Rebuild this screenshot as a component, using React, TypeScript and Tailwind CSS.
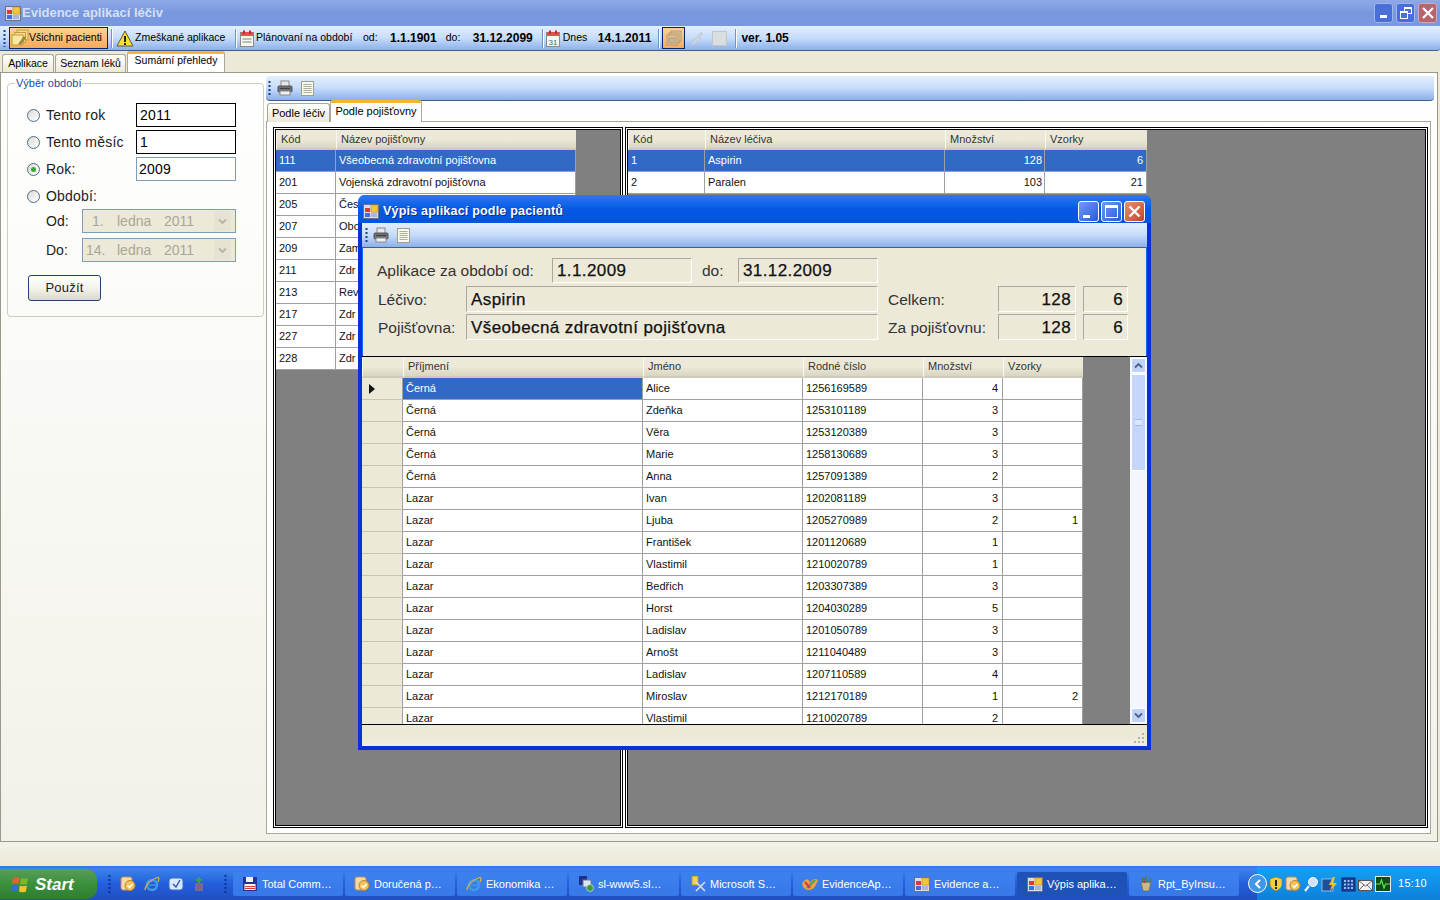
import React from "react";

const AppIcon = () => (
  <svg width="16" height="16" viewBox="0 0 16 16" className="shrink-0">
    <rect x="0.5" y="1.5" width="15" height="14" fill="#d9dce8" stroke="#6a6f8a" />
    <rect x="2" y="5" width="5" height="4" fill="#e23a2a" />
    <rect x="8" y="2" width="7" height="7" fill="#f6c63a" stroke="#b98a1a" strokeWidth="0.6" />
    <rect x="2" y="10" width="5" height="4" fill="#3f6fd8" />
    <rect x="8" y="10" width="6" height="4" fill="#a8b6d8" />
  </svg>
);

const Grip = ({ h = 16, color = "#1f3f86" }: { h?: number; color?: string }) => (
  <svg width="3" height={h} viewBox={`0 0 3 ${h}`} className="shrink-0">
    {[1, 5, 9, 13, 17, 21].filter((y) => y < h).map((y) => (
      <rect key={y} x="0.5" y={y} width="2" height="2" fill={color} />
    ))}
  </svg>
);

const Sep = () => <div className="w-px h-[19px] bg-[#6f93c9] border-r border-white box-content shrink-0" />;

const FolderIcon = () => (
  <svg width="18" height="18" viewBox="0 0 18 18" className="shrink-0">
    <rect x="6" y="1" width="11" height="10" fill="#f4d98a" stroke="#c79a3e" />
    <rect x="3.5" y="3.5" width="11" height="10" fill="#f7dd92" stroke="#c79a3e" />
    <rect x="1" y="6" width="11" height="10" fill="#fbe7a6" stroke="#c79a3e" />
    <path d="M7 15l6-8 2 2-5 7z" fill="#9a8a3a" />
  </svg>
);

const WarnIcon = () => (
  <svg width="18" height="17" viewBox="0 0 18 17" className="shrink-0">
    <path d="M9 1L17 16H1z" fill="#f8dc3a" stroke="#5a5a30" />
    <rect x="8" y="6" width="2" height="6" fill="#222" />
    <rect x="8" y="13" width="2" height="2" fill="#222" />
  </svg>
);

const CalIcon = ({ day }: { day?: string }) => (
  <svg width="14" height="17" viewBox="0 0 14 17" className="shrink-0">
    <rect x="0.5" y="2.5" width="13" height="14" fill="#f6f6f0" stroke="#8a8a8a" />
    <rect x="1" y="2" width="12" height="4" fill="#e25050" />
    <rect x="3" y="0.5" width="2" height="3.5" fill="#c02a2a" />
    <rect x="9" y="0.5" width="2" height="3.5" fill="#c02a2a" />
    {day ? (
      <text x="7" y="14.5" fontSize="8" textAnchor="middle" fill="#2f7a68" fontFamily="Liberation Sans">{day}</text>
    ) : (
      <g fill="#b9c0b0">
        <rect x="2.5" y="8" width="9" height="2" />
        <rect x="2.5" y="11" width="9" height="2" />
      </g>
    )}
  </svg>
);

const WindowsStack = () => (
  <svg width="16" height="16" viewBox="0 0 16 16">
    <rect x="5" y="1" width="10" height="10" fill="#f0c890" stroke="#b09a7a" />
    <rect x="3" y="3" width="10" height="10" fill="#eac48e" stroke="#b09a7a" />
    <rect x="1" y="5" width="10" height="10" fill="#e4c296" stroke="#b09a7a" />
    <rect x="3" y="8" width="6" height="5" fill="#cdb594" stroke="#b09a7a" />
  </svg>
);

const PrinterIcon = () => (
  <svg width="16" height="16" viewBox="0 0 16 16" className="shrink-0">
    <rect x="4" y="1" width="8" height="6" fill="#e8e8e8" stroke="#8a8a8a" />
    <rect x="1" y="6" width="14" height="6" rx="1" fill="#6d6f74" stroke="#55575c" />
    <rect x="3" y="11" width="10" height="4" fill="#f0f0f0" stroke="#8a8a8a" />
    <rect x="3" y="8" width="10" height="1" fill="#3f4145" />
  </svg>
);

const NoteIcon = () => (
  <svg width="13" height="15" viewBox="0 0 13 15" className="shrink-0">
    <rect x="0.5" y="0.5" width="12" height="14" fill="#f8f8ee" stroke="#9aa08a" />
    <g fill="#a9b298">
      <rect x="2.5" y="3" width="8" height="1" />
      <rect x="2.5" y="5" width="8" height="1" />
      <rect x="2.5" y="7" width="8" height="1" />
      <rect x="2.5" y="9" width="8" height="1" />
      <rect x="2.5" y="11" width="8" height="1" />
    </g>
  </svg>
);

const Radio = ({ on }: { on?: boolean }) => (
  <div className="w-[13px] h-[13px] rounded-full border border-[#4f6d8c] bg-gradient-to-br from-[#dcdcd4] to-white flex items-center justify-center shrink-0">
    {on && <div className="w-[5px] h-[5px] rounded-full bg-[#3aa83a]" />}
  </div>
);

const Chevron = ({ up, color = "#4d6185" }: { up?: boolean; color?: string }) => (
  <svg width="9" height="7" viewBox="0 0 9 7">
    <path d={up ? "M1 5.5L4.5 2 8 5.5" : "M1 1.5L4.5 5 8 1.5"} fill="none" stroke={color} strokeWidth="1.8" />
  </svg>
);

const Combo = ({ d, m, y, pl }: { d: string; m: string; y: string; pl: string }) => (
  <div className="w-[154px] h-[24px] border border-[#7f9db9] bg-[#ece9d8] flex items-center text-[14px] text-[#a8a699] shrink-0">
    <span className={pl + " w-[34px]"}>{d}</span>
    <span className="w-[47px]">{m}</span>
    <span className="w-[50px]">{y}</span>
    <div className="w-[17px] h-[20px] bg-[#e6e3d2] flex items-center justify-center">
      <Chevron color="#b5b3a6" />
    </div>
  </div>
);

const rowLeftA = [
  ["111", "Všeobecná zdravotní pojišťovna"],
  ["201", "Vojenská zdravotní pojišťovna"],
  ["205", "Čes"],
  ["207", "Obo"],
  ["209", "Zam"],
  ["211", "Zdr"],
  ["213", "Rev"],
  ["217", "Zdr"],
  ["227", "Zdr"],
  ["228", "Zdr"],
];

const rowsB = [
  ["1", "Aspirin", "128", "6"],
  ["2", "Paralen", "103", "21"],
];

const patients = [
  ["Černá", "Alice", "1256169589", "4", ""],
  ["Černá", "Zdeňka", "1253101189", "3", ""],
  ["Černá", "Věra", "1253120389", "3", ""],
  ["Černá", "Marie", "1258130689", "3", ""],
  ["Černá", "Anna", "1257091389", "2", ""],
  ["Lazar", "Ivan", "1202081189", "3", ""],
  ["Lazar", "Ljuba", "1205270989", "2", "1"],
  ["Lazar", "František", "1201120689", "1", ""],
  ["Lazar", "Vlastimil", "1210020789", "1", ""],
  ["Lazar", "Bedřich", "1203307389", "3", ""],
  ["Lazar", "Horst", "1204030289", "5", ""],
  ["Lazar", "Ladislav", "1201050789", "3", ""],
  ["Lazar", "Arnošt", "1211040489", "3", ""],
  ["Lazar", "Ladislav", "1207110589", "4", ""],
  ["Lazar", "Miroslav", "1212170189", "1", "2"],
  ["Lazar", "Vlastimil", "1210020789", "2", ""],
];

const hdrCell =
  "h-full bg-gradient-to-b from-[#ece9d8] via-[#ece9d8] to-[#d9d5c3] border-l border-[#f8f7f0] border-b-2 border-b-[#cfcbb8] flex items-center text-[11px] text-[#333] shrink-0 pl-[4px]";
const cell = "h-full border-r border-b border-[#a0a0a0] flex items-center text-[11px] shrink-0 whitespace-nowrap overflow-hidden pl-[3px]";
const cellR = "h-full border-r border-b border-[#a0a0a0] flex items-center justify-end text-[11px] shrink-0";

const Field = ({ w, children, right, h }: { w: string; children: React.ReactNode; right?: boolean; h: string }) => (
  <div
    className={
      w + " " + h + " border border-t-[#aca899] border-l-[#aca899] border-b-white border-r-white flex items-center shrink-0 pt-px text-[17px] tracking-[0.4px] [-webkit-text-stroke:0.25px_#111] text-[#111] " +
      (right ? "justify-end pr-[4px]" : "pl-[4px]")
    }
  >
    {children}
  </div>
);

const TaskBtn = ({ icon, label, active }: { icon: React.ReactNode; label: string; active?: boolean }) => (
  <div
    className={
      "w-[110px] h-[24px] mr-[2px] rounded-[2px] flex items-center gap-[3px] text-[11px] text-white shrink-0 whitespace-nowrap " +
      (active ? "bg-[#1e52b7] pl-[9px]" : "pl-[8px] bg-gradient-to-b from-[#3c80ee] to-[#3878e8]")
    }
  >
    <span className="w-[18px] h-[18px] flex items-center justify-center shrink-0">{icon}</span>
    <span>{label}</span>
  </div>
);

const OutlookIcon = () => (
  <svg width="16" height="16" viewBox="0 0 16 16">
    <rect x="1" y="1" width="11" height="13" rx="2" fill="#f3d9b0" stroke="#c78a4a" />
    <circle cx="10" cy="9.5" r="5" fill="#f6c25a" stroke="#b9832a" />
    <path d="M7.5 9.5l2 2 3-3.5" fill="none" stroke="#fff" strokeWidth="1.4" />
  </svg>
);
const IeIcon = () => (
  <svg width="16" height="16" viewBox="0 0 16 16">
    <circle cx="8" cy="9" r="5" fill="none" stroke="#3f9be8" strokeWidth="2.4" />
    <rect x="4.5" y="8.4" width="7.5" height="1.4" fill="#3f9be8" />
    <path d="M1 14C1 9 8 3 13.5 1.5 15.5 1 15 4 14 6" fill="none" stroke="#e8b23a" strokeWidth="1.2" />
  </svg>
);
const DiskIcon = () => (
  <svg width="16" height="16" viewBox="0 0 16 16">
    <rect x="1" y="1" width="14" height="14" fill="#27338f" />
    <rect x="4" y="1" width="7" height="5" fill="#f0f0f0" />
    <rect x="2.5" y="8" width="11" height="6" fill="#f6f6f6" />
    <rect x="3" y="10" width="10" height="1" fill="#d83a3a" />
    <rect x="3" y="12" width="10" height="1" fill="#d83a3a" />
  </svg>
);
const RemoteIcon = () => (
  <svg width="16" height="16" viewBox="0 0 16 16">
    <rect x="1" y="0" width="8" height="9" fill="#1f2f8f" />
    <rect x="5" y="4" width="8" height="7" fill="#dfe6f4" stroke="#6a7aa0" />
    <circle cx="12" cy="12" r="3.5" fill="#3c9a3c" stroke="#e8f4e8" strokeWidth="0.6" />
  </svg>
);
const SqlIcon = () => (
  <svg width="16" height="16" viewBox="0 0 16 16">
    <rect x="2" y="0" width="6" height="9" fill="#f1d25a" stroke="#b9982a" />
    <path d="M6 15L15 6M6 6l9 9" stroke="#d8dce8" strokeWidth="1.6" />
  </svg>
);
const VsIcon = () => (
  <svg width="18" height="14" viewBox="0 0 18 14">
    <path d="M1 7C4 1 8 1 9 6 11 2 14 1 17 3 15 9 12 13 8 13 5 13 2 11 1 7z" fill="#e9a23a" />
    <path d="M6 11L14 3" stroke="#3aa85a" strokeWidth="2" />
    <path d="M4 5l5 6" stroke="#c83a5a" strokeWidth="2" />
  </svg>
);
const CrystalIcon = () => (
  <svg width="16" height="16" viewBox="0 0 16 16">
    <path d="M3 6h10l-2 9H5z" fill="#c9b88a" stroke="#6a5a3a" strokeWidth="0.6" />
    <path d="M5 7L4 1M8 7V0M11 7l2-5" stroke="#3a8a4a" strokeWidth="1.5" />
    <path d="M6.5 7L6 2" stroke="#c83a3a" strokeWidth="1.2" />
  </svg>
);

export default function App() {
  return (
    <div className="relative w-[1440px] h-[900px] overflow-hidden flex flex-col bg-[#ece9d8] font-['Liberation_Sans',sans-serif] text-black">
      {/* title bar */}
      <div className="h-[26px] shrink-0 bg-gradient-to-b from-[#8fa9e6] via-[#7897de] to-[#7a98df] flex items-center pl-[5px]">
        <AppIcon />
        <span className="ml-[1px] text-[13px] font-bold text-[#d5e0f6] whitespace-nowrap">Evidence aplikací léčiv</span>
        <div className="ml-auto mr-[3px] flex gap-[3px]">
          <div className="w-[19px] h-[20px] rounded-[3px] bg-[#4a70d8] border border-[#9fb6ec] flex items-end pl-[5px] pb-[4px]">
            <div className="w-[7px] h-[3px] bg-white" />
          </div>
          <div className="relative w-[19px] h-[20px] rounded-[3px] bg-[#4a70d8] border border-[#9fb6ec]">
            <div className="absolute left-[7px] top-[3px] w-[8px] h-[7px] border border-white border-t-2" />
            <div className="absolute left-[3px] top-[7px] w-[8px] h-[8px] border border-white border-t-2 bg-[#4a70d8]" />
          </div>
          <div className="w-[19px] h-[20px] rounded-[3px] bg-[#b4656f] border border-[#d8a8b0] flex items-center justify-center">
            <svg width="12" height="12" viewBox="0 0 12 12"><path d="M1 1l10 10M11 1L1 11" stroke="#fff" strokeWidth="2.2" /></svg>
          </div>
        </div>
      </div>

      {/* main toolbar */}
      <div className="h-[25px] shrink-0 bg-gradient-to-b from-[#e3effd] via-[#c6dcfa] to-[#8cb0ea] border-b border-[#3f5d8f] rounded-br-[3px] flex items-center pl-[3px] text-[10.5px] whitespace-nowrap">
        <Grip h={18} />
        <div className="ml-[3px] w-[99px] h-[22px] bg-gradient-to-b from-[#fbd391] to-[#f7a95a] border border-[#0a2470] flex items-center pl-[1px]">
          <FolderIcon />
          <span>Všichni pacienti</span>
        </div>
        <div className="ml-[3px]"><Sep /></div>
        <div className="ml-[3px]"><WarnIcon /></div>
        <span className="ml-[1px] w-[96px]">Zmeškané aplikace</span>
        <div className="ml-[4px]"><Sep /></div>
        <div className="ml-[3px]"><CalIcon /></div>
        <span className="ml-[2px] w-[107px]">Plánovaní na období</span>
        <span className="w-[16px]">od:</span>
        <span className="ml-[11px] text-[12px] font-bold">1.1.1901</span>
        <span className="ml-[9px] w-[16px]">do:</span>
        <span className="ml-[11px] text-[12px] font-bold">31.12.2099</span>
        <div className="ml-[9px]"><Sep /></div>
        <div className="ml-[2px]"><CalIcon day="31" /></div>
        <span className="ml-[3px] w-[35px]">Dnes</span>
        <span className="text-[12px] font-bold tracking-[0.1px]">14.1.2011</span>
        <div className="ml-[7px]"><Sep /></div>
        <div className="ml-[2px] w-[23px] h-[22px] bg-gradient-to-b from-[#fbd391] to-[#f7a95a] border border-[#0a2470] flex items-center justify-center"><WindowsStack /></div>
        <svg width="16" height="16" viewBox="0 0 16 16" className="ml-[4px]"><path d="M2 14l7-8 3 2-7 7zM10 5l2-3 2 2-3 2z" fill="#cfd6df" stroke="#b4bcc8" strokeWidth="0.6" /></svg>
        <div className="ml-[7px] w-[15px] h-[15px] bg-[#d9dee0] border border-[#c0c6c8]" />
        <div className="ml-[8px]"><Sep /></div>
        <span className="ml-[4px] text-[12px] font-bold">ver. 1.05</span>
      </div>

      {/* tabs */}
      <div className="h-[21px] shrink-0 flex items-end pl-[2px] text-[10.5px]">
        <div className="w-[52px] h-[18px] bg-gradient-to-b from-white to-[#ece9d8] border border-b-0 border-[#a9a797] rounded-t-[3px] flex items-center justify-center">Aplikace</div>
        <div className="ml-[1px] w-[71px] h-[18px] bg-gradient-to-b from-white to-[#ece9d8] border border-b-0 border-[#a9a797] rounded-t-[3px] flex items-center justify-center">Seznam léků</div>
        <div className="ml-[1px] w-[98px] h-[21px] bg-white border-t-[3px] border-t-[#f8b33c] border-x border-x-[#a9a797] rounded-t-[3px] flex items-start justify-center leading-[13px]">Sumární přehledy</div>
      </div>

      {/* tab page */}
      <div className="h-[770px] shrink-0 mr-[2px] border border-[#9a9a8c] bg-gradient-to-b from-white to-[#f2f1e8] flex">
        {/* left column */}
        <div className="w-[265px] shrink-0 pl-[6px]">
          <fieldset className="mt-[2px] w-[257px] h-[242px] border border-[#cfcdbf] rounded-[4px] pl-[19px] block">
            <legend className="ml-[-12px] px-[1px] text-[11px] text-[#1b4a9c]">Výběr období</legend>
            <div className="flex items-center h-[27px] mt-[10px]">
              <Radio />
              <span className="ml-[6px] w-[90px] text-[14px] tracking-[0.2px] text-[#222]">Tento rok</span>
              <div className="w-[100px] h-[24px] border border-black bg-white text-[14px] tracking-[0.3px] flex items-center pl-[3px]">2011</div>
            </div>
            <div className="flex items-center h-[27px]">
              <Radio />
              <span className="ml-[6px] w-[90px] text-[14px] tracking-[0.2px] text-[#222] whitespace-nowrap">Tento měsíc</span>
              <div className="w-[100px] h-[24px] border border-black bg-white text-[14px] flex items-center pl-[3px]">1</div>
            </div>
            <div className="flex items-center h-[27px]">
              <Radio on />
              <span className="ml-[6px] w-[90px] text-[14px] tracking-[0.2px] text-[#222]">Rok:</span>
              <div className="w-[100px] h-[24px] border border-[#7f9db9] bg-white text-[14px] tracking-[0.2px] flex items-center pl-[2px]">2009</div>
            </div>
            <div className="flex items-center h-[27px]">
              <Radio />
              <span className="ml-[6px] text-[14px] tracking-[0.2px] text-[#222]">Období:</span>
            </div>
            <div className="flex items-center h-[29px] ml-[19px] mt-[-3px]">
              <span className="w-[36px] text-[14px] text-[#222]">Od:</span>
              <Combo d="1." m="ledna" y="2011" pl="pl-[9px]" />
            </div>
            <div className="flex items-center h-[29px] ml-[19px]">
              <span className="w-[36px] text-[14px] text-[#222]">Do:</span>
              <Combo d="14." m="ledna" y="2011" pl="pl-[3px]" />
            </div>
            <div className="mt-[10px] ml-px w-[73px] h-[26px] border border-[#21456e] rounded-[3px] bg-gradient-to-b from-white via-[#f4f3ec] to-[#dcd9cb] flex items-center justify-center text-[13px] tracking-[0.2px] text-[#222]">Použít</div>
          </fieldset>
        </div>

        {/* right column */}
        <div className="flex-1 pt-[3px] pr-[3px] flex flex-col">
          <div className="h-[25px] shrink-0 bg-gradient-to-b from-[#e3effd] via-[#c6dcfa] to-[#8cb0ea] border-b border-[#3f5d8f] rounded-l-[4px] rounded-br-[4px] flex items-center pl-[2px] gap-[8px]">
            <div className="mr-[-2px]"><Grip h={16} /></div>
            <PrinterIcon />
            <NoteIcon />
          </div>
          <div className="h-[21px] shrink-0 flex items-end pl-[1px] text-[11px] relative z-10 -mb-px">
            <div className="w-[63px] h-[19px] bg-gradient-to-b from-white to-[#ece9d8] border border-b-0 border-[#a9a797] rounded-t-[3px] flex items-center justify-center">Podle léčiv</div>
            <div className="w-[92px] h-[22px] bg-white border-t-[3px] border-t-[#f8b33c] border-x border-x-[#a9a797] rounded-t-[3px] flex items-start justify-center">Podle pojišťovny</div>
          </div>
          <div className="w-[1165px] h-[713px] shrink-0 border border-[#a9a797] bg-white pt-[5px] pl-[6px] flex gap-[2px]">
            {/* grid 1 */}
            <div className="w-[350px] h-[701px] border border-black p-px shrink-0">
              <div className="h-full border border-black bg-[#808080] overflow-hidden">
                <div className="flex h-[20px] w-fit">
                  <div className={hdrCell + " w-[60px]"}>Kód</div>
                  <div className={hdrCell + " w-[240px]"}>Název pojišťovny</div>
                </div>
                {rowLeftA.map((r, i) => (
                  <div key={r[0]} className={"flex h-[22px] w-fit " + (i === 0 ? "bg-[#316ac5] text-white" : "bg-white text-[#111]")}>
                    <div className={cell + " w-[60px]"}>{r[0]}</div>
                    <div className={cell + " w-[240px]"}>{r[1]}</div>
                  </div>
                ))}
              </div>
            </div>
            {/* grid 2 */}
            <div className="w-[803px] h-[701px] border border-black p-px shrink-0">
              <div className="h-full border border-black bg-[#808080] overflow-hidden">
                <div className="flex h-[20px] w-fit">
                  <div className={hdrCell + " w-[77px]"}>Kód</div>
                  <div className={hdrCell + " w-[240px]"}>Název léčiva</div>
                  <div className={hdrCell + " w-[100px]"}>Množství</div>
                  <div className={hdrCell + " w-[102px]"}>Vzorky</div>
                </div>
                {rowsB.map((r, i) => (
                  <div key={r[0]} className={"flex h-[22px] w-fit " + (i === 0 ? "bg-[#316ac5] text-white" : "bg-white text-[#111]")}>
                    <div className={cell + " w-[77px]"}>{r[0]}</div>
                    <div className={cell + " w-[240px]"}>{r[1]}</div>
                    <div className={cellR + " w-[100px] pr-[2px]"}>{r[2]}</div>
                    <div className={cellR + " w-[102px] pr-[3px]"}>{r[3]}</div>
                  </div>
                ))}
              </div>
            </div>
          </div>
        </div>
      </div>

      {/* strip */}
      <div className="h-[24px] shrink-0 bg-gradient-to-b from-[#f3f2e8] to-[#ece9d8]" />

      {/* taskbar */}
      <div className="h-[34px] shrink-0 bg-gradient-to-b from-[#3c85ea] via-[#245edb] to-[#1f4fc0] border-t-2 border-t-[#2f7bea] flex items-end pb-px">
        <div className="w-[97px] h-[30px] shrink-0 rounded-r-[10px] bg-gradient-to-b from-[#5a9c5a] via-[#3a913a] to-[#2f7d33] flex items-center pl-[11px] gap-[5px]">
          <svg width="19" height="19" viewBox="0 0 19 19">
            <path d="M2 3Q5 1.5 8.5 3L7.5 9Q4.5 7.5 1 9z" fill="#e8622a" />
            <path d="M10 3Q13 4.5 17 3L16 9Q13 10 9 9z" fill="#7ab82a" />
            <path d="M1 10.5Q4 9 7.2 10.5L6 16.5Q3 15 0 16.5z" fill="#2f6fd8" />
            <path d="M8.8 10.5Q12 12 15.8 10.5L15 16.5Q12 18 8 16.5z" fill="#f4c42a" />
          </svg>
          <span className="text-[17px] font-bold italic text-white pt-px">Start</span>
        </div>
        <div className="h-[30px] flex items-center pl-[11px] shrink-0">
          <Grip h={20} color="#0f2f9a" />
          <div className="ml-[9px] flex items-center gap-[8px]">
            <OutlookIcon />
            <IeIcon />
            <svg width="16" height="16" viewBox="0 0 16 16"><rect x="1" y="2" width="14" height="12" rx="3" fill="#dbe8fb" stroke="#3b6fc8" /><path d="M5 8l3 3 4-7" stroke="#2c5fb8" strokeWidth="1.5" fill="none" /></svg>
            <svg width="14" height="16" viewBox="0 0 14 16"><rect x="3" y="7" width="8" height="8" fill="#7a6a8a" /><path d="M7 1v6M4 4h6" stroke="#3aa05a" strokeWidth="2" /></svg>
          </div>
          <div className="ml-[18px]"><Grip h={20} color="#0f2f9a" /></div>
          <div className="ml-[6px] h-[26px] flex items-center">
            <TaskBtn icon={<DiskIcon />} label="Total Comm…" />
            <TaskBtn icon={<OutlookIcon />} label="Doručená p…" />
            <TaskBtn icon={<IeIcon />} label="Ekonomika …" />
            <TaskBtn icon={<RemoteIcon />} label="sl-www5.sl…" />
            <TaskBtn icon={<SqlIcon />} label="Microsoft S…" />
            <TaskBtn icon={<VsIcon />} label="EvidenceAp…" />
            <TaskBtn icon={<AppIcon />} label="Evidence a…" />
            <TaskBtn active icon={<AppIcon />} label="Výpis aplika…" />
            <TaskBtn icon={<CrystalIcon />} label="Rpt_ByInsu…" />
          </div>
        </div>
        <div className="ml-auto h-[33px] w-[183px] shrink-0 bg-gradient-to-b from-[#14a0f0] via-[#1290e8] to-[#0e7fd8] flex items-center -mb-px relative">
          <div className="absolute -left-[9px] top-[7px] w-[19px] h-[19px] rounded-full bg-[#3f97ea] border border-white flex items-center justify-center">
            <svg width="8" height="10" viewBox="0 0 8 10"><path d="M6 1L2 5l4 4" stroke="#fff" strokeWidth="2" fill="none" /></svg>
          </div>
          <div className="ml-[12px] flex items-center gap-[2px]">
            <svg width="14" height="16" viewBox="0 0 14 16"><path d="M7 1L13 3V8C13 12 9 14 7 15 5 14 1 12 1 8V3z" fill="#f2cf3a" stroke="#8a7a1a" strokeWidth="0.6" /><rect x="6" y="4" width="2" height="6" fill="#222" /><rect x="6" y="11" width="2" height="2" fill="#222" /></svg>
            <OutlookIcon />
            <svg width="16" height="16" viewBox="0 0 16 16"><circle cx="10" cy="6" r="4.5" fill="#cfe4fa" stroke="#fff" /><path d="M6 10l-4 5" stroke="#f0f4fa" strokeWidth="2.2" /></svg>
            <svg width="18" height="16" viewBox="0 0 18 16"><rect x="1" y="3" width="11" height="12" fill="#1f4f9a" stroke="#dfe8f8" strokeWidth="0.6" /><path d="M12 1L8 9h3l-2 6 7-8h-4l2-6z" fill="#f4c42a" /></svg>
            <svg width="15" height="16" viewBox="0 0 15 16"><rect x="1" y="2" width="13" height="13" fill="#1a3f9a" stroke="#0f2a70" /><g fill="#8fc0f4"><rect x="3" y="4" width="2" height="2" /><rect x="6.5" y="4" width="2" height="2" /><rect x="10" y="4" width="2" height="2" /><rect x="3" y="7.5" width="2" height="2" /><rect x="6.5" y="7.5" width="2" height="2" /><rect x="10" y="7.5" width="2" height="2" /><rect x="3" y="11" width="2" height="2" /><rect x="6.5" y="11" width="2" height="2" /><rect x="10" y="11" width="2" height="2" /></g></svg>
            <svg width="15" height="11" viewBox="0 0 15 11" className="mt-[3px]"><rect x="0.5" y="0.5" width="14" height="10" fill="#f2f2f2" stroke="#555" /><path d="M1 1l6.5 5L14 1M1 10l5-5M14 10L9 5" stroke="#6a6a7a" fill="none" /></svg>
            <svg width="16" height="16" viewBox="0 0 16 16"><rect x="0.5" y="0.5" width="15" height="15" fill="#0d4d1a" stroke="#e8e8e8" /><path d="M1 8h4l1.5-4L9 12l1.5-4H15" stroke="#5aea4a" fill="none" strokeWidth="1.2" /></svg>
          </div>
          <span className="ml-[7px] text-[11px] tracking-[0.3px] text-white">15:10</span>
        </div>
      </div>

      {/* dialog window */}
      <div className="absolute left-[358px] top-[195px] w-[793px] h-[555px] bg-[#ece9d8] border-x-4 border-b-4 border-x-[#0831d9] border-b-[#0831d9] rounded-t-[7px] flex flex-col shadow-[inset_0_0_0_1px_#1665f0]">
        <div className="h-[28px] -mx-[4px] shrink-0 rounded-t-[7px] bg-gradient-to-b from-[#2a7bf0] via-[#0458e4] to-[#0553df] flex items-center pl-[5px] pt-[4px]">
          <AppIcon />
          <span className="ml-[4px] text-[12.5px] font-bold tracking-[0.2px] text-white [text-shadow:1px_1px_0_#0a2a90] whitespace-nowrap">Výpis aplikací podle pacientů</span>
          <div className="ml-auto mr-[6px] flex gap-[2px]">
            <div className="w-[21px] h-[21px] rounded-[3px] bg-gradient-to-br from-[#6f9bf5] to-[#2a58dc] border border-white flex items-end pl-[4px] pb-[3px]">
              <div className="w-[7px] h-[3px] bg-white" />
            </div>
            <div className="w-[21px] h-[21px] rounded-[3px] bg-gradient-to-br from-[#6f9bf5] to-[#2a58dc] border border-white flex items-center justify-center">
              <div className="w-[13px] h-[13px] border border-white border-t-[3px]" />
            </div>
            <div className="w-[21px] h-[21px] rounded-[3px] bg-gradient-to-br from-[#e89070] to-[#c8401e] border border-white flex items-center justify-center">
              <svg width="13" height="13" viewBox="0 0 13 13"><path d="M1.5 1.5l10 10M11.5 1.5l-10 10" stroke="#fff" strokeWidth="2.4" /></svg>
            </div>
          </div>
        </div>
        <div className="h-[25px] shrink-0 bg-gradient-to-b from-[#e3effd] via-[#c6dcfa] to-[#8cb0ea] border-b border-[#3f5d8f] flex items-center pl-[3px] gap-[8px]">
          <div className="mr-[-3px]"><Grip h={16} /></div>
          <PrinterIcon />
          <NoteIcon />
        </div>

        {/* info panel */}
        <div className="h-[108px] shrink-0 text-[#333] pt-[10px] pl-[15px] flex flex-col">
          <div className="flex items-center h-[25px]">
            <span className="w-[175px] pt-px text-[15.5px] whitespace-nowrap">Aplikace za období od:</span>
            <Field w="w-[140px]" h="h-[25px]">1.1.2009</Field>
            <span className="ml-[10px] w-[36px] pt-px text-[15.5px]">do:</span>
            <Field w="w-[140px]" h="h-[25px]">31.12.2009</Field>
          </div>
          <div className="flex items-center h-[26px] mt-[3px] pl-px">
            <span className="w-[88px] pt-px text-[15.5px]">Léčivo:</span>
            <Field w="w-[412px]" h="h-[26px]">Aspirin</Field>
            <span className="ml-[10px] w-[110px] pt-px text-[15.5px]">Celkem:</span>
            <Field w="w-[78px]" h="h-[26px]" right>128</Field>
            <div className="ml-[7px]"><Field w="w-[45px]" h="h-[26px]" right>6</Field></div>
          </div>
          <div className="flex items-center h-[26px] mt-[2px] pl-px">
            <span className="w-[88px] pt-px text-[15.5px] whitespace-nowrap">Pojišťovna:</span>
            <Field w="w-[412px]" h="h-[26px]">Všeobecná zdravotní pojišťovna</Field>
            <span className="ml-[10px] w-[110px] pt-px text-[15.5px] whitespace-nowrap">Za pojišťovnu:</span>
            <Field w="w-[78px]" h="h-[26px]" right>128</Field>
            <div className="ml-[7px]"><Field w="w-[45px]" h="h-[26px]" right>6</Field></div>
          </div>
        </div>

        {/* patient grid */}
        <div className="h-[369px] shrink-0 border-y border-black bg-[#808080] flex overflow-hidden">
          <div className="w-[768px] shrink-0 overflow-hidden">
            <div className="flex h-[21px] w-fit">
              <div className={hdrCell + " w-[41px]"} />
              <div className={hdrCell + " w-[240px]"}>Příjmení</div>
              <div className={hdrCell + " w-[160px]"}>Jméno</div>
              <div className={hdrCell + " w-[120px]"}>Rodné číslo</div>
              <div className={hdrCell + " w-[80px]"}>Množství</div>
              <div className={hdrCell + " w-[80px]"}>Vzorky</div>
            </div>
            {patients.map((r, i) => (
              <div key={i} className="flex h-[22px] w-fit bg-white text-[#111]">
                <div className="w-[41px] h-full shrink-0 bg-[#ece9d8] border-b border-r border-b-[#c8c5b4] border-r-[#a0a0a0] flex items-center pl-[7px]">
                  {i === 0 && <svg width="6" height="10" viewBox="0 0 6 10"><path d="M0 0l6 5-6 5z" fill="#111" /></svg>}
                </div>
                <div className={cell + " w-[240px] " + (i === 0 ? "bg-[#316ac5] text-white" : "")}>{r[0]}</div>
                <div className={cell + " w-[160px]"}>{r[1]}</div>
                <div className={cell + " w-[120px]"}>{r[2]}</div>
                <div className={cellR + " w-[80px] pr-[4px]"}>{r[3]}</div>
                <div className={cellR + " w-[80px] pr-[4px]"}>{r[4]}</div>
              </div>
            ))}
          </div>
          <div className="w-[17px] h-full shrink-0 bg-[#f3f7fd] flex flex-col p-px">
            <div className="h-[15px] shrink-0 rounded-[2px] bg-[#c1d3fb] border border-white flex items-center justify-center"><Chevron up /></div>
            <div className="flex-1 pt-px">
              <div className="h-[97px] rounded-[2px] bg-[#c6d5fb] border border-white flex items-center justify-center">
                <div className="w-[7px] h-[7px] border-y border-[#a5bae8] bg-[#dbe5fb]" />
              </div>
            </div>
            <div className="h-[15px] shrink-0 rounded-[2px] bg-[#c1d3fb] border border-white flex items-center justify-center"><Chevron /></div>
          </div>
        </div>

        {/* status bar */}
        <div className="flex-1 bg-gradient-to-b from-[#ece9d8] via-[#ece9d8] to-[#f2efe0] flex items-end justify-end pr-[2px] pb-[2px]">
          <svg width="11" height="11" viewBox="0 0 11 11">
            <g fill="#b5b2a3">
              <rect x="8" y="0" width="2" height="2" /><rect x="4" y="4" width="2" height="2" /><rect x="8" y="4" width="2" height="2" />
              <rect x="0" y="8" width="2" height="2" /><rect x="4" y="8" width="2" height="2" /><rect x="8" y="8" width="2" height="2" />
            </g>
          </svg>
        </div>
      </div>
    </div>
  );
}
